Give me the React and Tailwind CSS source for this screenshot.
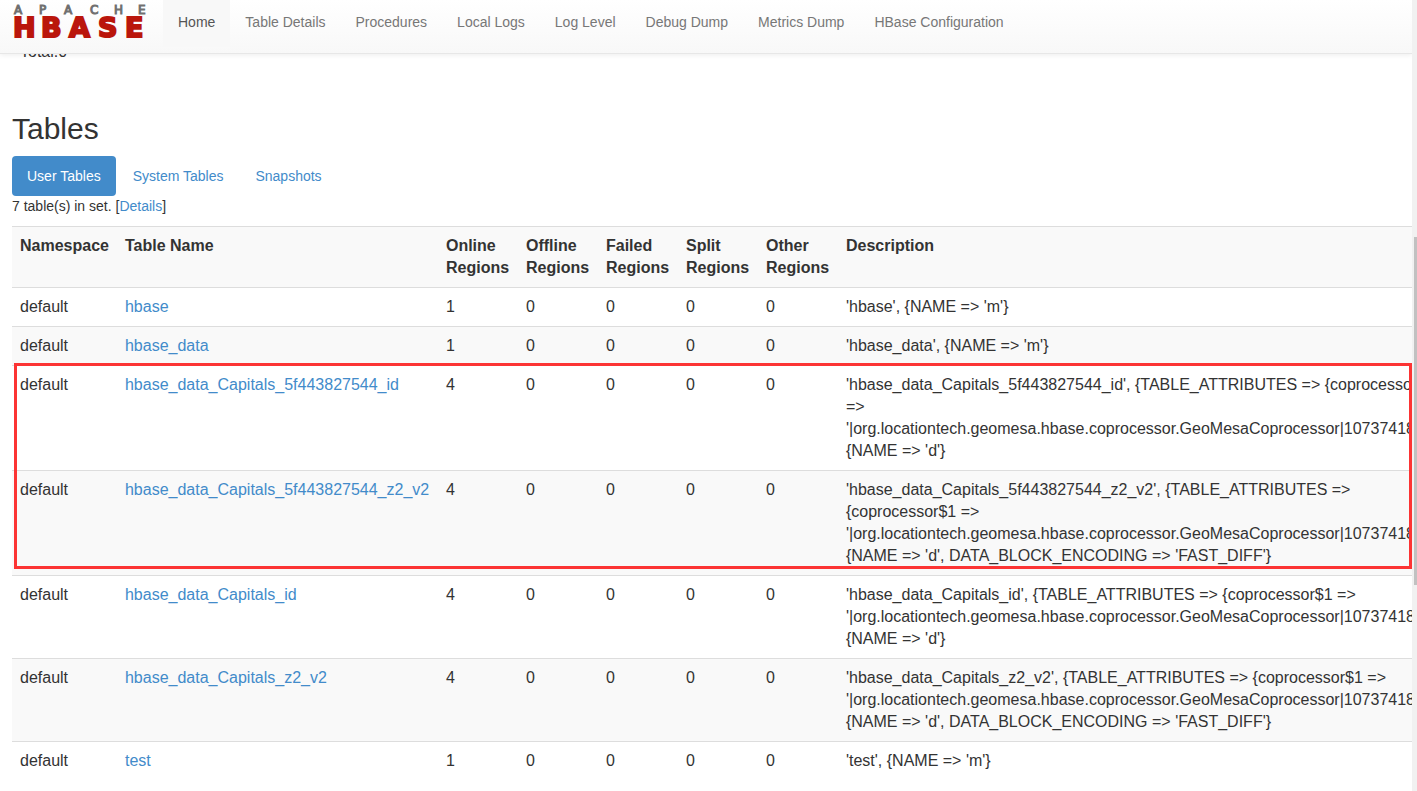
const navLinks = [
    { label: 'Home', href: '#home', active: true },
    { label: 'Table Details', href: '#table-details' },
    { label: 'Procedures', href: '#procedures' },
    { label: 'Local Logs', href: '#logs' },
    { label: 'Log Level', href: '#log-level' },
    { label: 'Debug Dump', href: '#dump' },
    { label: 'Metrics Dump', href: '#jmx' },
    { label: 'HBase Configuration', href: '#conf' },
]

const tabs = [
    { label: 'User Tables', href: '#tab_userTables', active: true },
    { label: 'System Tables', href: '#tab_catalogTables' },
    { label: 'Snapshots', href: '#tab_userSnapshots' },
]

const columns = [
    { label: 'Namespace', width: '' },
    { label: 'Table Name', width: 'min-w-[321px]' },
    { label: 'Online Regions', width: 'min-w-20' },
    { label: 'Offline Regions', width: 'min-w-20' },
    { label: 'Failed Regions', width: 'min-w-20' },
    { label: 'Split Regions', width: 'min-w-20' },
    { label: 'Other Regions', width: 'min-w-20' },
    { label: 'Description', width: '' },
]

const coprocessor = "{TABLE_ATTRIBUTES => {coprocessor$1 => '|org.locationtech.geomesa.hbase.coprocessor.GeoMesaCoprocessor|1073741823|'},"

const userTables = [
    { name: 'hbase', online: 1, description: "{NAME => 'm'}" },
    { name: 'hbase_data', online: 1, description: "{NAME => 'm'}" },
    { name: 'hbase_data_Capitals_5f443827544_id', online: 4, description: `${coprocessor} {NAME => 'd'}` },
    { name: 'hbase_data_Capitals_5f443827544_z2_v2', online: 4, description: `${coprocessor} {NAME => 'd', DATA_BLOCK_ENCODING => 'FAST_DIFF'}` },
    { name: 'hbase_data_Capitals_id', online: 4, description: `${coprocessor} {NAME => 'd'}` },
    { name: 'hbase_data_Capitals_z2_v2', online: 4, description: `${coprocessor} {NAME => 'd', DATA_BLOCK_ENCODING => 'FAST_DIFF'}` },
    { name: 'test', online: 1, description: "{NAME => 'm'}" },
]

function Logo() {
    return (
        <svg width="134" height="36" viewBox="0 0 134 36" role="img" aria-label="Apache HBase" className="shrink-0 overflow-visible" fontFamily="'DejaVu Sans', sans-serif">
            <text x="0 25 50 76 100 124" y="10" fontSize="12" fill="#707070" stroke="#707070" strokeWidth="1">APACHE</text>
            <text x="-1 27 55 84 111" y="33" fontSize="27" fontWeight="bold" fill="#ba160c" stroke="#ba160c" strokeWidth="2">HBASE</text>
        </svg>
    )
}

function Navbar() {
    return (
        <header className="absolute inset-x-0 top-0 z-10 flex h-[54px] items-start border-b border-[#e7e7e7] bg-gradient-to-b from-white to-[#f8f8f8] shadow-[0_1px_5px_rgba(0,0,0,0.075)]">
            <a href="#home" className="pt-1 pr-[15px] pl-[14px]">
                <Logo />
            </a>
            <nav className="flex text-sm leading-5">
                {navLinks.map(({ label, href, active }) => (
                    <a key={label} href={href}
                        className={`px-[15px] pt-3 pb-[15px] whitespace-nowrap ${active ? 'bg-[#f8f8f8] text-[#555]' : 'text-[#777] hover:text-[#333]'}`}>
                        {label}
                    </a>
                ))}
            </nav>
        </header>
    )
}

function TablesList() {
    return (
        <div className="relative">
            <table className="w-full border-collapse text-left text-base leading-[22px]">
                <thead>
                    <tr className="border-t border-[#ddd] bg-[#f9f9f9]">
                        {columns.map(({ label, width }) => (
                            <th key={label} scope="col" className={`p-2 align-top font-bold ${width}`}>{label}</th>
                        ))}
                    </tr>
                </thead>
                <tbody>
                    {userTables.map(({ name, online, description }) => (
                        <tr key={name} className="border-t border-[#ddd] align-top even:bg-[#f9f9f9]">
                            <td className="p-2">default</td>
                            <td className="p-2"><a href={`#${name}`} className="text-[#428bca] hover:underline">{name}</a></td>
                            <td className="p-2">{online}</td>
                            <td className="p-2">0</td>
                            <td className="p-2">0</td>
                            <td className="p-2">0</td>
                            <td className="p-2">0</td>
                            <td className="p-2">{`'${name}', ${description}`}</td>
                        </tr>
                    ))}
                </tbody>
            </table>
            {/* Marker around the two GeoMesa index tables */}
            <div className="pointer-events-none absolute top-[137px] right-0 left-[2px] h-[206px] border-3 border-[#fc3434]" />
        </div>
    )
}

export default function App() {
    return (
        <div className="flex h-screen overflow-hidden bg-white font-['Liberation_Sans',Arial,sans-serif] text-[#333]">
            <div className="relative min-w-0 flex-1 overflow-hidden">
                <Navbar />
                <main className="pt-[41px] pl-3">
                    <p className="px-2 text-base leading-[22px]">Total:0</p>
                    <h2 className="mt-[49px] mb-[11px] text-3xl leading-[33px] font-medium">Tables</h2>
                    <div className="flex gap-[2px] text-sm leading-5">
                        {tabs.map(({ label, href, active }) => (
                            <a key={label} href={href}
                                className={`rounded px-[15px] py-[10px] ${active ? 'bg-[#428bca] text-white' : 'text-[#428bca] hover:bg-gray-200'}`}>
                                {label}
                            </a>
                        ))}
                    </div>
                    <p className="mb-[10px] text-sm leading-5">
                        7 table(s) in set. [<a href="#details" className="text-[#428bca] hover:underline">Details</a>]
                    </p>
                    <TablesList />
                </main>
            </div>

            {/* Scrollbar */}
            <div className="w-[5px] shrink-0 bg-[#f1f1f1] pl-[2px]" aria-hidden="true">
                <div className="h-[30%]" />
                <div className="h-[44%] bg-[#c1c1c1]" />
            </div>
        </div>
    )
}
